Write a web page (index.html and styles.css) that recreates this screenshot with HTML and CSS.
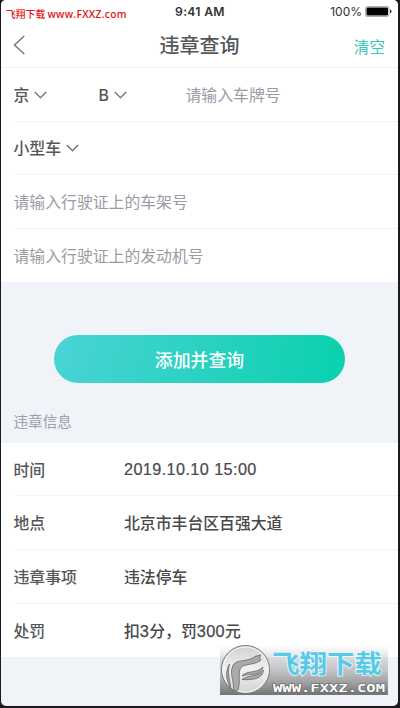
FILE: index.html
```
<!DOCTYPE html>
<html lang="zh-CN">
<head>
<meta charset="utf-8">
<title>违章查询</title>
<link rel="stylesheet" href="styles.css">
</head>
<body>
<main class="phone">
  <div class="status">
    <span class="source">飞翔下载 <b>www.FXXZ.com</b></span>
    <span class="clock">9:41 AM</span>
    <span class="power">100%
      <svg width="27" height="11" viewBox="0 0 27 11"><rect x=".5" y=".5" width="23.5" height="10" rx="1.8" fill="#fff" stroke="#777" stroke-width=".6"/><rect x="1.5" y="1.5" width="21.5" height="8" rx="1" fill="#000"/><path d="M25 3.6q1.5.6 1.5 1.9t-1.5 1.9z" fill="#222"/></svg>
    </span>
  </div>
  <header class="nav">
    <svg class="back" width="13" height="20" viewBox="0 0 13 20"><path d="M11.3 1 1.5 10l9.8 9" fill="none" stroke="#777" stroke-width="1.5"/></svg>
    <h1>违章查询</h1>
    <a class="clear">清空</a>
  </header>
  <section class="list form">
    <div class="row">
      <span class="province">京<svg class="caret" viewBox="0 0 13 8"><path d="m.8 1 5.7 5.8L12.2 1"/></svg></span>
      <span class="letter">B<svg class="caret" viewBox="0 0 13 8"><path d="m.8 1 5.7 5.8L12.2 1"/></svg></span>
      <span class="hint">请输入车牌号</span>
    </div>
    <div class="row"><span>小型车<svg class="caret" viewBox="0 0 13 8"><path d="m.8 1 5.7 5.8L12.2 1"/></svg></span></div>
    <div class="row"><span class="hint">请输入行驶证上的车架号</span></div>
    <div class="row"><span class="hint">请输入行驶证上的发动机号</span></div>
  </section>
  <div class="action"><button class="submit">添加并查询</button></div>
  <h2>违章信息</h2>
  <section class="list info">
    <div class="row"><span class="label">时间</span><span class="value date">2019.10.10 15:00</span></div>
    <div class="row"><span class="label">地点</span><span class="value">北京市丰台区百强大道</span></div>
    <div class="row"><span class="label">违章事项</span><span class="value">违法停车</span></div>
    <div class="row"><span class="label">处罚</span><span class="value">扣<span class="num">3</span>分，罚<span class="num">300</span>元</span></div>
  </section>
  <svg class="badge" width="168" height="50" viewBox="0 0 168 50">
    <defs>
      <linearGradient id="shade" x2="0" y2="1"><stop stop-color="#aaa" stop-opacity="0"/><stop offset=".5" stop-color="#aaa" stop-opacity=".65"/><stop offset="1" stop-color="#737373"/></linearGradient>
      <linearGradient id="disc" x2="0" y2="1"><stop stop-color="#d0d0d0"/><stop offset=".5" stop-color="#f1f1f1"/><stop offset="1" stop-color="#d3d3d3"/></linearGradient>
    </defs>
    <rect width="168" height="50" fill="url(#shade)"/>
    <circle cx="25.5" cy="24.5" r="24" fill="url(#disc)" stroke="#777"/>
    <circle cx="25.5" cy="24.5" r="22.5" fill="none" stroke="#f7f7f7"/>
    <g fill="#aaa" stroke="#666" stroke-width=".8">
      <path d="M13 46C15 38 10 31 12 23C14 14 24 17 32 13.5L35 11.5 40.5 10 39.5 13 41 15C36 19.5 28 18.5 22 21.5C17 25 21 36 18 45Z"/>
      <path d="M9.5 19C7 27 10 36 11 44C6 35 5 27 9.5 19Z"/>
      <path d="M22 31C27 25 36 29 43 22C42 27 37 29.5 31 29.5 26 29.5 24 31 22 31Z"/>
      <path d="M22 34.5C29 29.5 38 32.5 43.5 25C43 33 34 35.5 22 34.5Z"/>
    </g>
    <g transform="translate(52 28) scale(1 .92)"><text class="brand" textLength="110" lengthAdjust="spacingAndGlyphs">飞翔下载</text></g>
    <text class="site" x="53" y="47" textLength="112" lengthAdjust="spacingAndGlyphs">WWW.FXXZ.COM</text>
  </svg>
</main>
</body>
</html>
```
FILE: styles.css
```
* { box-sizing: border-box; }
body {
  margin: 0;
  height: 708px;
  padding: 0 2px 2px 1px;
  background: #1b1b1d;
  overflow: hidden;
  font-family: "Liberation Sans", "Noto Sans CJK SC", sans-serif;
}
.phone {
  position: relative;
  height: 706px;
  background: #f0f3f8;
  border-radius: 5px;
  overflow: hidden;
  color: #565658;
}
.status {
  height: 23px;
  background: #fff;
  display: grid;
  grid-template-columns: 140px 117px 1fr;
  align-items: center;
  color: #333;
}
.source { padding: 5px 0 0 5px; font: 500 9.8px/14px "Noto Sans CJK SC", sans-serif; color: #dc1820; white-space: nowrap; }
.source b { font: 600 10.2px/14px "Open Sans", "Liberation Sans", sans-serif; letter-spacing: .32px; }
.clock { text-align: center; font: 600 12.2px/22px Inter, "Liberation Sans", sans-serif; letter-spacing: .3px; padding-left: 1px; }
.power { display: flex; align-items: center; justify-content: flex-end; gap: 3px; padding-right: 6px; font: 400 12px/22px Inter, sans-serif; }
.nav {
  height: 45px;
  padding: 0 13px 0 12px;
  border-bottom: 1px solid #f2f2f3;
  background: #fff;
  display: grid;
  grid-template-columns: 60px 1fr 60px;
  align-items: center;
}
.back { display: block; }
.nav h1 { margin: 0; padding: 1px 0 0 1px; font-size: 20px; font-weight: 500; line-height: 30px; text-align: center; }
.clear { padding-top: 1px; text-align: right; font-size: 15.6px; color: #38c8b4; }
.list { background: #fff; padding-left: 12.5px; font-size: 15.85px; }
.row { height: 53.6px; padding-top: 3px; display: flex; align-items: center; border-bottom: 1px solid #f3f3f4; line-height: 24px; font-weight: 500; }
.row:last-child { border-bottom: 0; }
.row > span { white-space: nowrap; }
.province { width: 85px; }
.letter { width: 87px; font-family: Inter, sans-serif; }
.hint { color: #9b9ba5; font-weight: 400; }
.caret { width: 13px; height: 8px; margin-left: 5px; vertical-align: 2px; fill: none; stroke: #777; stroke-width: 1.4; }
.action { height: 119px; padding: 53px 53px 0; }
.submit {
  display: block;
  width: 291px;
  height: 48px;
  padding: 0;
  border: 0;
  border-radius: 24px;
  background: linear-gradient(100deg, #4bd3d6, #09d1ad);
  color: #fff;
  font: 500 17.9px/46px "Noto Sans CJK SC", sans-serif;
}
h2 { margin: 0; height: 41.5px; padding: 10px 0 0 12.5px; font-size: 14.6px; font-weight: 400; line-height: 22px; color: #9ca0aa; }
.label { width: 110.5px; }
.value { color: #48484a; }
.date { margin-top: -3px; font-family: "Liberation Sans", sans-serif; font-size: 16.2px; font-weight: 400; letter-spacing: .42px; -webkit-text-stroke: .2px; }
.num { font-family: "Liberation Sans", sans-serif; font-size: 16.3px; font-weight: 400; letter-spacing: .35px; -webkit-text-stroke: .25px; }
.badge { position: absolute; left: 219px; top: 645px; overflow: visible; }
.brand { font: 700 27.5px/1 "Noto Sans CJK SC", sans-serif; fill: #5bc8e5; stroke: #e6faff; stroke-width: 1.8px; paint-order: stroke; }
.site { font: 700 11px "DejaVu Sans Mono", monospace; fill: #fff; stroke: #666; stroke-width: 1.2px; paint-order: stroke; }
```
